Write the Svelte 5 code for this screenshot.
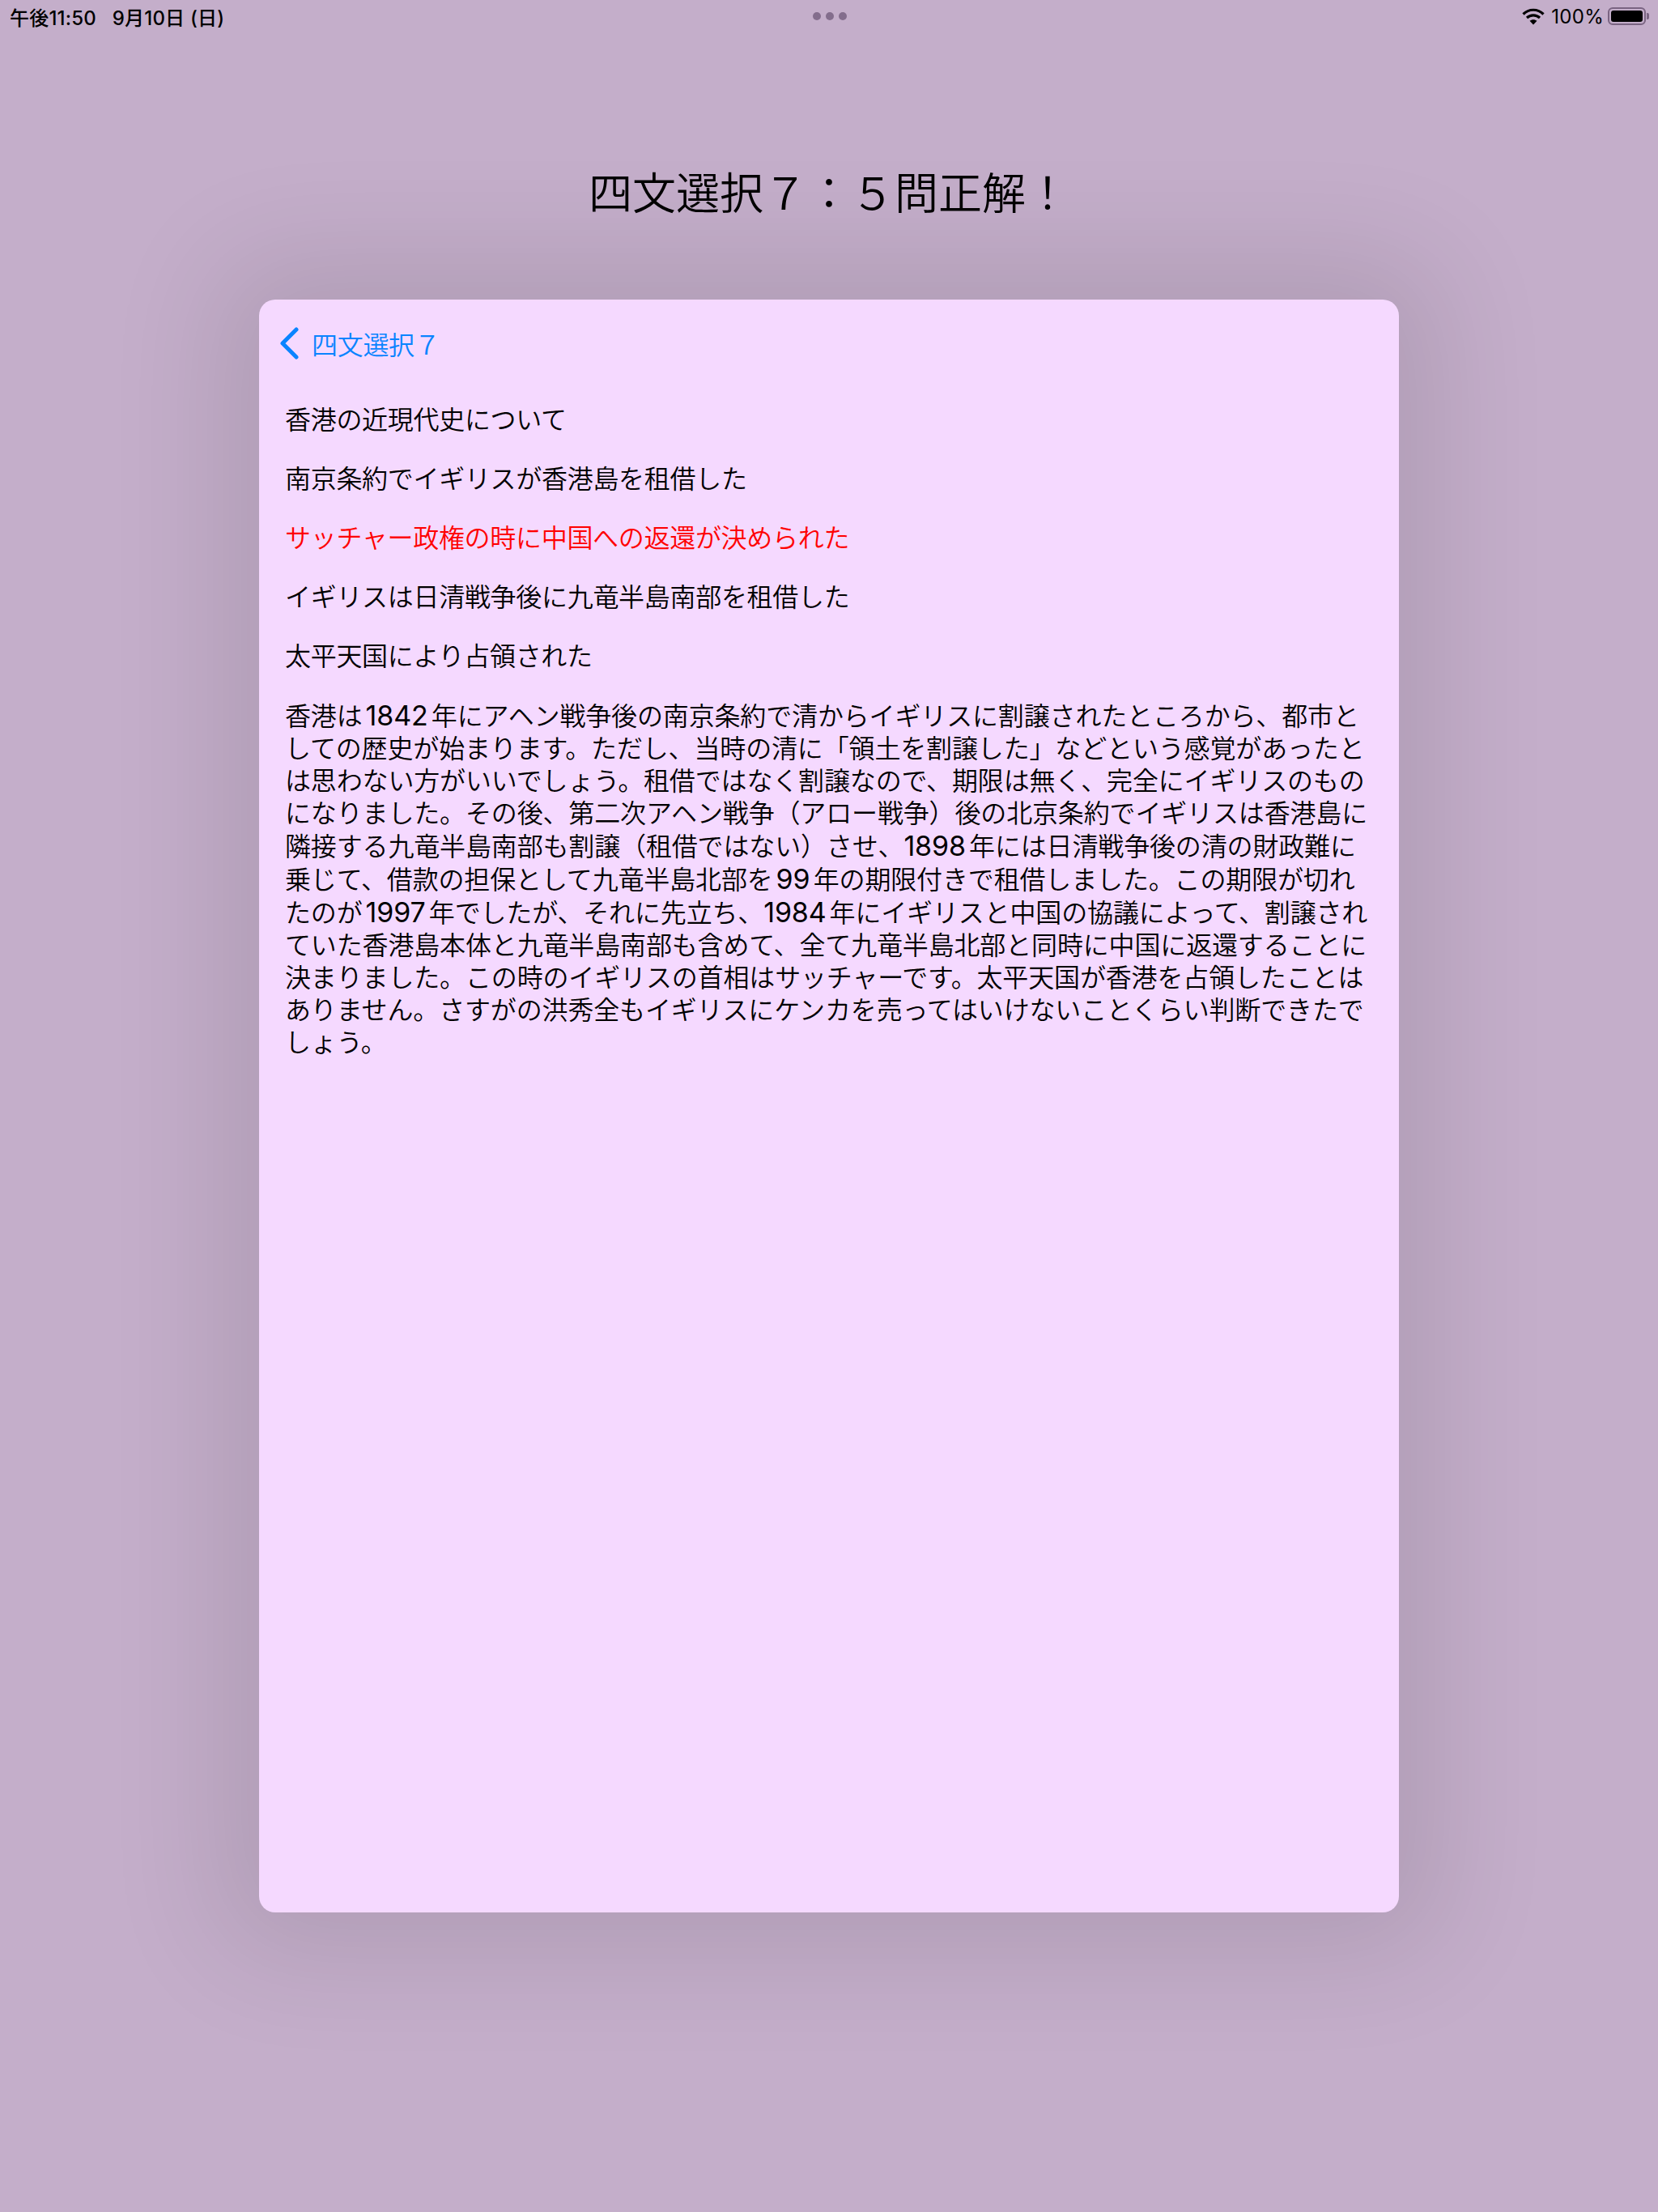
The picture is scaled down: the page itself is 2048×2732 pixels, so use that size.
<script>
	const choices = [
		{ text: "南京条約でイギリスが香港島を租借した" },
		{ text: "サッチャー政権の時に中国への返還が決められた", wrong: true },
		{ text: "イギリスは日清戦争後に九竜半島南部を租借した" },
		{ text: "太平天国により占領された" }
	];

	const explanation = [
		"香港は1842年にアヘン戦争後の南京条約で清からイギリスに割譲されたところから、都市と",
		"しての歴史が始まります。ただし、当時の清に「領土を割譲した」などという感覚があったと",
		"は思わない方がいいでしょう。租借ではなく割譲なので、期限は無く、完全にイギリスのもの",
		"になりました。その後、第二次アヘン戦争（アロー戦争）後の北京条約でイギリスは香港島に",
		"隣接する九竜半島南部も割譲（租借ではない）させ、1898年には日清戦争後の清の財政難に",
		"乗じて、借款の担保として九竜半島北部を99年の期限付きで租借しました。この期限が切れ",
		"たのが1997年でしたが、それに先立ち、1984年にイギリスと中国の協議によって、割譲され",
		"ていた香港島本体と九竜半島南部も含めて、全て九竜半島北部と同時に中国に返還することに",
		"決まりました。この時のイギリスの首相はサッチャーです。太平天国が香港を占領したことは",
		"ありません。さすがの洪秀全もイギリスにケンカを売ってはいけないことくらい判断できたで",
		"しょう。"
	];

	// digits sit a bit larger than the kana around them
	const parts = (line) => line.split(/(\d+)/);
</script>

<div class="screen">
	<header class="status">
		<span class="time">午後11:50&nbsp;&nbsp;&nbsp;9月10日 (日)</span>
		<div class="dots"><i></i><i></i><i></i></div>
		<div class="right">
			<svg class="wifi" width="28" height="21" viewBox="0 0 28 21">
				<path d="M1.500 7.500C8.500.5 19.500.5 26.500 7.500" fill="none" stroke="#000" stroke-width="3.200"/>
				<path d="M6 12C10.500 7.800 17.500 7.800 22 12" fill="none" stroke="#000" stroke-width="3.200"/>
				<path d="M14 20.500l-4.500-4.700c2.500-2.200 6.500-2.200 9 0z" fill="#000"/>
			</svg>
			<span class="pct">100%</span>
			<div class="battery"><div class="level"></div></div>
		</div>
	</header>

	<h1>四文選択７：５問正解！</h1>

	<main class="card">
		<nav class="back">
			<svg width="26" height="40" viewBox="0 0 26 40">
				<path d="M22 3 L5 20 L22 37" fill="none" stroke="#0a84ff" stroke-width="5" stroke-linecap="round" stroke-linejoin="round"/>
			</svg>
			<span>四文選択７</span>
		</nav>

		<div class="body">
			<p>香港の近現代史について</p>
			{#each choices as c}
				<p class:wrong={c.wrong}>{c.text}</p>
			{/each}
			<p class="explain">
				{#each explanation as line}
					<span class="line">
						{#each parts(line) as part, i}{#if i % 2}<span class="num">{part}</span>{:else}{part}{/if}{/each}
					</span>
				{/each}
			</p>
		</div>
	</main>
</div>

<style>
	:global(body) {
		margin: 0;
		background: #c4aeca;
	}

	.screen {
		width: 2048px;
		height: 2732px;
		background: #c4aeca;
		font-family: "Noto Sans CJK JP", sans-serif;
		color: #000;
		overflow: hidden;
		display: flex;
		flex-direction: column;
		align-items: center;
	}

	.status {
		align-self: stretch;
		height: 40px;
		padding: 0 10px 0 12px;
		display: grid;
		grid-template-columns: 1fr auto 1fr;
		align-items: center;
		font-family: Inter, "Noto Sans CJK JP", sans-serif;
		font-size: 24px;
	}

	.time {
		font-weight: 500;
		white-space: nowrap;
		letter-spacing: 0.2px;
	}

	.pct {
		letter-spacing: 0.3px;
		margin-right: -3px;
	}

	.dots {
		display: flex;
		gap: 6px;
	}

	.dots i {
		width: 10px;
		height: 10px;
		border-radius: 50%;
		background: #836d8c;
	}

	.right {
		display: flex;
		align-items: center;
		justify-content: flex-end;
		gap: 8px;
	}

	.battery {
		position: relative;
		width: 47px;
		height: 22px;
		box-sizing: border-box;
		border: 2px solid #7a6482;
		border-radius: 6px;
		padding: 2px;
		margin-right: 5px;
	}

	.battery::after {
		content: "";
		position: absolute;
		left: 46px;
		top: 5px;
		width: 3px;
		height: 8px;
		background: #7a6482;
		border-radius: 0 2px 2px 0;
	}

	.level {
		height: 100%;
		background: #000;
		border-radius: 3px;
	}

	h1 {
		margin: 157px 0 0;
		height: 173px;
		font-size: 54px;
		font-weight: 350;
		line-height: 78px;
	}

	.card {
		width: 1408px;
		height: 1992px;
		box-sizing: border-box;
		background: #f5d9ff;
		border-radius: 20px;
		box-shadow: 0 0 140px 50px rgba(0, 0, 0, 0.1);
		padding: 22px 32px 0;
	}

	.back {
		display: flex;
		align-items: center;
		gap: 15px;
		height: 64px;
		margin-left: -8px;
		font-size: 32px;
		font-weight: 350;
		letter-spacing: -0.300px;
		color: #0a84ff;
	}

	.body {
		margin-top: 43px;
		font-family: Inter, "Noto Sans CJK JP", sans-serif;
		font-size: 32px;
		font-weight: 350;
		letter-spacing: -0.300px;
		line-height: 40.500px;
		text-autospace: normal;
	}

	.body p {
		margin: 0 0 32.500px;
	}

	.wrong {
		color: #ff0000;
	}

	.explain {
		letter-spacing: -0.150px;
		line-height: 40px;
	}

	.line {
		display: block;
		white-space: nowrap;
	}

	.num {
		font-size: 34px;
		font-weight: 400;
	}
</style>
